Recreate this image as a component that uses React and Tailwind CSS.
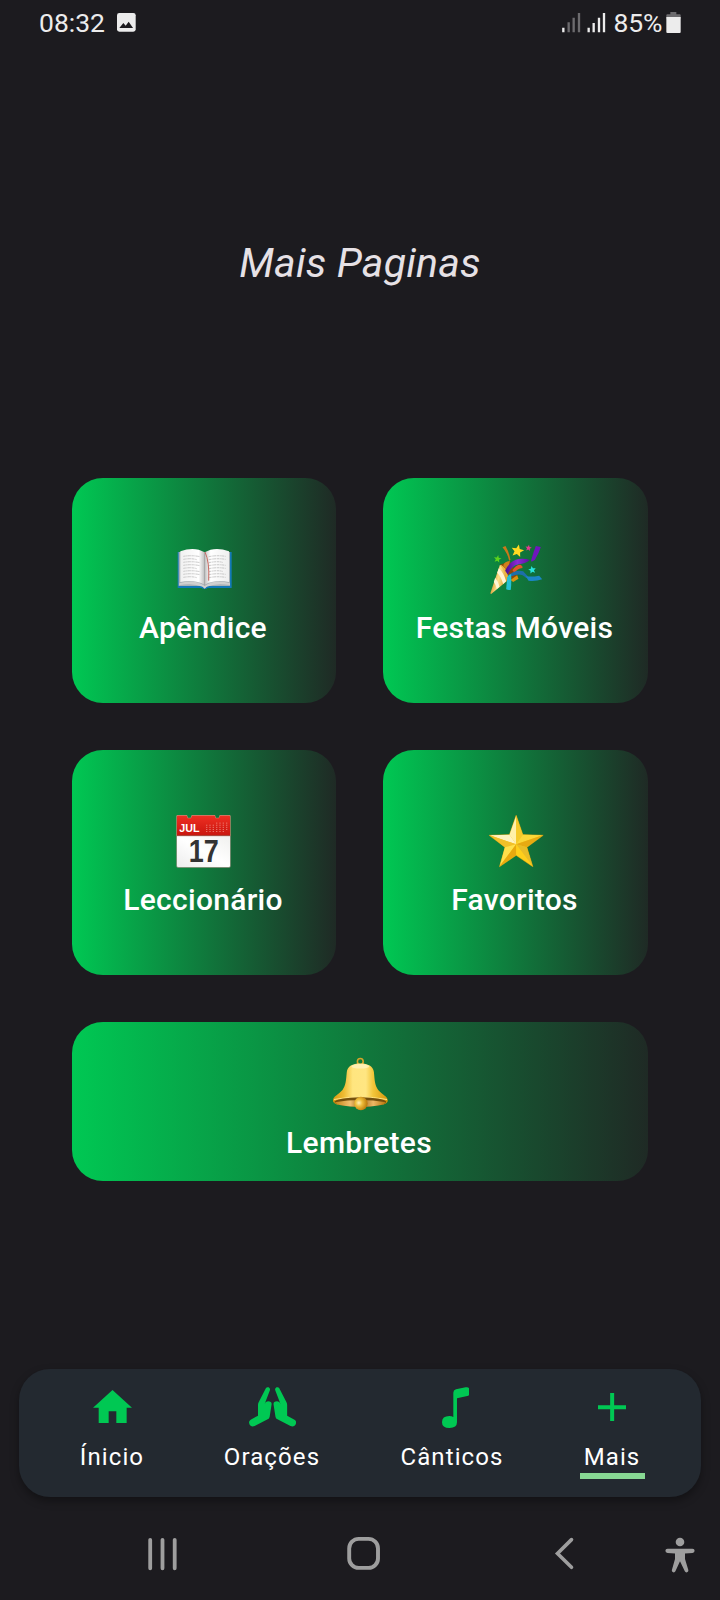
import React from "react";

function BookIcon() {
  const rows = [0, 1, 2, 3, 4, 5, 6, 7];
  return (
    <svg viewBox="348 246 168 168" className="size-14">
      <defs>
        <linearGradient id="pageL" x1="0" x2="1">
          <stop offset="0" stopColor="#f1f1f1" />
          <stop offset="0.75" stopColor="#fff" />
          <stop offset="1" stopColor="#bdbdbd" />
        </linearGradient>
        <linearGradient id="pageR" x1="0" x2="1">
          <stop offset="0" stopColor="#c4c4c4" />
          <stop offset="0.25" stopColor="#fff" />
          <stop offset="1" stopColor="#efefef" />
        </linearGradient>
      </defs>
      <path d="M353 276h162v108h-72q-2 3-9 3t-9-3h-72z" fill="#1379b8" />
      <path d="M356 276h154v102h-67l-9 7-9-7h-69z" fill="#a9b0b5" />
      <path d="M358 370q45-14 76 8 31-22 76-8v5q-42-7-70 5l-6 6-6-6q-28-12-70-5z" fill="#d0d0d0" />
      <path d="M361 274q42-16 73 3v97q-30-16-73-8z" fill="url(#pageL)" />
      <path d="M507 274q-42-16-73 3v97q30-16 73-8z" fill="url(#pageR)" />
      <path d="M434 277v99" stroke="#8f8f8f" strokeWidth="1.5" />
      {rows.map((i) => (
        <g key={i} stroke="#a8a8a8" strokeWidth="1.8" strokeDasharray="7 1.5 4 1 9 2" fill="none">
          <path d={`M370 ${289 + i * 9}q25-4 ${i % 3 === 1 ? 40 : 50} 1`} />
          <path d={`M446 ${290 + i * 9}q25-5 ${i % 3 === 2 ? 42 : 51} -1`} />
        </g>
      ))}
      <path d="M435 276q14 30 11 86" fill="none" stroke="#c96a62" strokeWidth="3" />
    </svg>
  );
}

function starPoints(cx, cy, r, inner, rot) {
  return Array.from({ length: 10 }, (_, i) => {
    const a = ((i * 36 - 90 + rot) * Math.PI) / 180;
    const d = i % 2 ? inner : r;
    return `${(cx + d * Math.cos(a)).toFixed(1)},${(cy + d * Math.sin(a)).toFixed(1)}`;
  }).join(" ");
}

function PartyIcon() {
  return (
    <svg viewBox="352.5 246 168 168" className="size-14">
      <defs>
        <linearGradient id="cone" x1="0" x2="1" y1="0.3" y2="0.6">
          <stop offset="0" stopColor="#c37a0c" />
          <stop offset="0.45" stopColor="#ffe08a" />
          <stop offset="1" stopColor="#c98510" />
        </linearGradient>
        <linearGradient id="violet" x1="0" x2="1">
          <stop offset="0" stopColor="#4b0c8f" />
          <stop offset="0.5" stopColor="#8a2bd6" />
          <stop offset="1" stopColor="#5b129e" />
        </linearGradient>
      </defs>
      <path d="M388 314l30-10 25 48-13 12z" fill="#8a4a08" />
      <path d="M396 262l9-4q12 20 15 42l-4 2q-5-22-20-40z" fill="#c9781a" />
      <path d="M398 318q2-14 20-15l-6 32z" fill="#d0801c" />
      <path d="M388 315q10 2 20 17 8 14 6 27l-52 43q-3 0-2-4z" fill="url(#cone)" />
      <path d="M385 325q15 14 22 39l-9 8q-7-24-18-34zM374 353q9 10 13 27l-8 7q-3-13-9-21z" fill="#fff5d4" />
      <path d="M390 317l4-1q15 12 20 44l-4 3q-6-33-20-46z" fill="#efb73a" />
      <path d="M404 332q13-30 41-35 21-2 33 3-14 11-33 13-23 4-33 31z" fill="url(#violet)" />
      <path d="M482 301q7-26 14-43l15 3q-6 19-18 39l-10 5z" fill="#6f16bd" />
      <path d="M426 331q9-17 24-17 8 4 6 10-16 2-24 15z" fill="#e4552a" />
      <path d="M420 360l20-14 4 10-16 10z" fill="#d8930f" />
      <path d="M411 348q23-20 47-14l18 19-9 1q-17-18-43-5z" fill="#1d6fa8" />
      <path d="M466 349q20 2 40-2l9 11q-21 7-41 4z" fill="#1b86c4" />
      <path d="M410 352q4-8 12-10 1 28-1 47-7 3-14-1z" fill="#25c1d4" />
      <polygon points={starPoints(441, 273, 20, 9, 12)} fill="#ffdb22" />
      <polygon points={starPoints(381, 297, 12, 5, 10)} fill="#5bd31c" />
      <polygon points={starPoints(474, 264, 10, 4.5, 8)} fill="#e93a8d" />
      <polygon points={starPoints(485, 330, 12, 5.5, -10)} fill="#27e5dd" />
    </svg>
  );
}

function CalendarIcon() {
  const cols = [0, 1, 2, 3, 4, 5, 6];
  return (
    <svg viewBox="348 222 168 168" className="size-14">
      <defs>
        <linearGradient id="sheet" x1="0" x2="1" y1="1" y2="0">
          <stop offset="0" stopColor="#ededed" />
          <stop offset="0.5" stopColor="#ffffff" />
          <stop offset="1" stopColor="#f0f0ee" />
        </linearGradient>
        <linearGradient id="header" x1="0" x2="0" y1="0" y2="1">
          <stop offset="0" stopColor="#ee2f22" />
          <stop offset="1" stopColor="#c9160f" />
        </linearGradient>
      </defs>
      <path d="M349 284h163v94q0 5-5 5H354q-5 0-5-5z" fill="#a09a8c" />
      <path d="M351 286h159v91q0 4-4 4H355q-4 0-4-4z" fill="url(#sheet)" />
      <path d="M349 229q0-4 4-4h28l3 8h8l3-8h70l3 8h8l3-8h29q4 0 4 4v58H349z" fill="#c98a73" />
      <path d="M351 230q0-3 3-3h26l3 8h10l3-8h68l3 8h10l3-8h27q3 0 3 3v56H351z" fill="url(#header)" />
      <path d="M350 287h161" stroke="#8e2018" strokeWidth="2" />
      {[0, 1, 2, 3, 4].map((r) =>
        cols.map((c) =>
          (r === 0 && c < 3) || (r === 4 && c > 5) ? null : (
            <rect key={`${r}-${c}`} x={438 + c * 10} y={248 + r * 6.3} width="4" height="2.6" fill="#f5a9a0" opacity="0.7" />
          )
        )
      )}
      <text x="358" y="276" textLength="61" lengthAdjust="spacingAndGlyphs" className="fill-white font-['Liberation_Sans',sans-serif] text-[34px] font-bold">JUL</text>
      <text x="386" y="367" textLength="90" lengthAdjust="spacingAndGlyphs" className="fill-[#333333] font-['Liberation_Sans',sans-serif] text-[96px] font-bold">17</text>
    </svg>
  );
}

function StarIcon() {
  return (
    <svg viewBox="352.5 222 168 168" className="size-14">
      <path d="M437 226l20 58 61 2-49 36 18 58-50-34-50 34 17-58-48-36 61-2z" fill="#f6c518" stroke="#dba312" strokeWidth="2" strokeLinejoin="round" />
      <path d="M437 227v86l-20-29z" fill="#fff0a8" />
      <path d="M437 227v86l20-29z" fill="#f5c92a" />
      <path d="M358 286l59-2 20 29z" fill="#fff3c0" />
      <path d="M358 286l79 27-34 9z" fill="#f2c029" />
      <path d="M516 286l-59-2-20 29z" fill="#fbd738" />
      <path d="M516 286l-79 27 32 9z" fill="#e7aa12" />
      <path d="M388 378l15-56 34-9z" fill="#ffe04b" />
      <path d="M388 378l49-33v-32z" fill="#e8a90f" />
      <path d="M486 378l-17-56-32-9z" fill="#e9bd27" />
      <path d="M486 378l-49-33v-32z" fill="#ffcf1b" />
    </svg>
  );
}

function BellIcon() {
  return (
    <svg viewBox="0 0 56 56" className="size-14">
      <defs>
        <linearGradient id="bell" x1="0" x2="1">
          <stop offset="0" stopColor="#d79a10" />
          <stop offset="0.2" stopColor="#eebc33" />
          <stop offset="0.36" stopColor="#ffe57f" />
          <stop offset="0.6" stopColor="#ffe682" />
          <stop offset="0.73" stopColor="#f3c63b" />
          <stop offset="1" stopColor="#d69509" />
        </linearGradient>
        <linearGradient id="lip" x1="0" x2="1">
          <stop offset="0" stopColor="#c58414" />
          <stop offset="0.3" stopColor="#f2c070" />
          <stop offset="0.5" stopColor="#9b6513" />
          <stop offset="0.75" stopColor="#eeb765" />
          <stop offset="1" stopColor="#b67208" />
        </linearGradient>
        <radialGradient id="clapper" cx="0.35" cy="0.45" r="0.65">
          <stop offset="0" stopColor="#fff1b8" />
          <stop offset="0.4" stopColor="#edbd3b" />
          <stop offset="1" stopColor="#b9780a" />
        </radialGradient>
      </defs>
      <ellipse cx="28.3" cy="4.6" rx="2.9" ry="3.1" fill="none" stroke="#d5a42a" strokeWidth="1.6" />
      <path d="M28.3 6.4C20.5 6.4 15.5 9 14.8 15C14 23 14 28 10.5 33C6.500 37.500 1 39.500 1 43.500Q1 46 5 47.500H51.500Q55.800 46 55.800 43.500C55.800 39.500 50 37.500 46.200 33C42.700 28 42.700 23 41.900 15C41.200 9 36 6.400 28.300 6.400Z" fill="url(#bell)" />
      <ellipse cx="28.3" cy="9.300" rx="9" ry="2.300" fill="#fff5c7" opacity="0.7" />
      <path d="M2 42.500Q28 37.500 55 42.500" fill="none" stroke="#ffe386" strokeWidth="1" />
      <ellipse cx="28.400" cy="45" rx="26" ry="4.700" fill="#75500d" />
      <path d="M2.800 45.300Q28 40.500 54 45.300Q51 49.700 28.400 49.900Q5.500 49.700 2.800 45.300Z" fill="url(#lip)" />
      <circle cx="28.900" cy="46.500" r="6.700" fill="url(#clapper)" />
    </svg>
  );
}

function Card({ icon, label, className }) {
  return (
    <button className={`flex flex-col items-center gap-3 rounded-[31px] bg-linear-to-r/srgb from-[#00c853] to-[#1f2a25] ${className}`}>
      {icon}
      <span className="mr-[2px] text-[30px] leading-9 font-medium tracking-[0.300px] whitespace-nowrap text-white">{label}</span>
    </button>
  );
}

function NavItem({ label, children, active, className }) {
  return (
    <a className={`flex flex-col items-center ${className}`}>
      <span className="flex h-[50px] items-center justify-center text-[#00c853]">{children}</span>
      <span className="mt-[9px] text-[24px] leading-8 tracking-[1.100px] whitespace-nowrap text-white">{label}</span>
      {active && <span className="h-1.5 w-[65px] bg-[#88d994]" />}
    </a>
  );
}

function StatusBar() {
  return (
    <header className="flex h-[50px] items-start justify-between pr-[39px] pl-[39px]">
      <div className="flex items-start">
        <span className="mt-[7px] text-[26.500px] leading-8 text-[#ececec]">08:32</span>
        <svg viewBox="352 39 56 56" className="mt-[13px] ml-[12px] h-[18.700px] w-[18.700px]">
          <rect x="352" y="39" width="56" height="56" rx="7" fill="#ececec" />
          <path d="M359 84l12-15 7 8 9-12 13 19z" fill="#1c1b1f" />
        </svg>
      </div>
      <div className="flex items-start">
        <svg viewBox="127 36 132 63" className="mt-3 h-[21px] w-11" fill="none" strokeWidth="7">
          <path d="M131 83v14M207 83v14M222 69v28M238 53v44M253 39v58" stroke="#ececec" />
          <path d="M147 67v30M162 53v44M178 39v58" stroke="#6c6b6e" />
        </svg>
        <span className="mt-[7px] ml-[7px] text-[26.500px] leading-8 tracking-[-0.100px] text-[#ececec]">85%</span>
        <svg viewBox="440 36 44 63" className="mt-3 ml-[4px] h-[21px] w-[14.700px]">
          <path d="M453 36h18v7h10q3 0 3 3v10h-43V46q0-3 3-3h9z" fill="#6c6b6e" />
          <path d="M441 51h43v45q0 3-3 3h-37q-3 0-3-3z" fill="#ececec" />
        </svg>
      </div>
    </header>
  );
}

function SystemBar() {
  return (
    <footer className="flex h-[90px] items-start text-[#9e9e9e]">
      <svg viewBox="0 0 30 36" className="mt-[26px] ml-[147px] h-9 w-[30px]" stroke="currentColor" strokeWidth="3.800" strokeLinecap="round">
        <path d="M3.200 3.800v28.500M15.500 3.800v28.500M27.700 3.800v28.500" />
      </svg>
      <svg viewBox="0 0 34 34" className="mt-[26px] ml-[169.500px] h-[34px] w-[34px]" fill="none" stroke="currentColor" strokeWidth="3.900">
        <rect x="2.200" y="2.900" width="28.800" height="29" rx="9.500" />
      </svg>
      <svg viewBox="0 0 22 36" className="mt-[26px] ml-[172.500px] h-9 w-[22px]" fill="none" stroke="currentColor" strokeWidth="3.600" strokeLinecap="round">
        <path d="M18.500 3.600L4.500 17.500L18.500 31.300" />
      </svg>
      <svg viewBox="0 0 30 37" className="mt-[27px] ml-[89.500px] h-[37px] w-[30px]" fill="currentColor">
        <circle cx="15" cy="5" r="4.300" />
        <path d="M2.500 11.700h25a2.100 2.100 0 0 1 0 4.200L20 16.600V22l3.400 11.300a1.900 1.900 0 0 1-3.600 1L15 24.300l-4.600 10a1.900 1.900 0 0 1-3.600-1L10 22v-5.400l-7.500-.7a2.100 2.100 0 0 1 0-4.200z" />
      </svg>
    </footer>
  );
}

export default function App() {
  return (
    <div className="flex h-[1600px] w-[720px] flex-col overflow-hidden bg-[#1c1b1f] font-[Roboto,sans-serif]">
      <StatusBar />
      <h1 className="mt-[189px] text-center text-[41px] leading-[48px] font-normal tracking-[0.200px] text-[#e6e1e5] italic">Mais Paginas</h1>
      <main className="mt-[191px] ml-[72px] grid w-[576px] grid-cols-[264px_265px] gap-[47px]">
        <Card icon={<BookIcon />} label="Apêndice" className="h-[225px] pt-16" />
        <Card icon={<PartyIcon />} label="Festas Móveis" className="h-[225px] pt-16" />
        <Card icon={<CalendarIcon />} label="Leccionário" className="h-[225px] pt-16" />
        <Card icon={<StarIcon />} label="Favoritos" className="h-[225px] pt-16" />
        <Card icon={<BellIcon />} label="Lembretes" className="col-span-2 h-[159px] pt-[35px]" />
      </main>
      <nav className="mt-[188px] ml-[19px] flex h-32 w-[682px] shrink-0 rounded-[31px] bg-[#232930] pt-[13px] pl-[13px] shadow-[0_4px_8px_rgba(0,0,0,0.35)]">
        <NavItem label="Ínicio" className="w-40">
          <svg viewBox="279 90 117 100" className="mb-px h-[33.300px] w-[39px]" fill="currentColor">
            <path d="M337.500 90L396 143H380V190H349V154H326V190H296V143H279z" />
          </svg>
        </NavItem>
        <NavItem label="Orações" className="w-40">
          <svg viewBox="747 83 142 119" className="ml-[1.500px] h-[39.700px] w-[47.300px]" fill="currentColor">
            <path id="hand" d="M798 86Q801 82 806 84Q811 87 810 92L794 134Q796 126 804 126Q815 126 815 134L809 172Q808 178 803 180L764 200Q754 204 749 196Q744 186 752 181L774 169V137Q774 133 776 129z" />
            <use href="#hand" transform="translate(1635.500 0) scale(-1 1)" />
          </svg>
        </NavItem>
        <NavItem label="Cânticos" className="w-[200px]">
          <svg viewBox="245 81 82 123" className="ml-[7px] h-[41px] w-[27.300px]" fill="currentColor">
            <path d="M279 98Q279 90 287 88L316 82Q327 80 327 89V101Q327 107 321 108L290 115V187Q290 204 267.500 204Q245 204 245 186.500Q245 168 267 168Q274 168 279 171z" />
          </svg>
        </NavItem>
        <NavItem label="Mais" className="w-[120px]" active>
          <svg viewBox="715 100 85 85" className="h-[28.300px] w-[28.300px]" stroke="currentColor" strokeWidth="12">
            <path d="M757.500 100V185M715 142.500H800" />
          </svg>
        </NavItem>
      </nav>
      <div className="mt-auto">
        <SystemBar />
      </div>
    </div>
  );
}
